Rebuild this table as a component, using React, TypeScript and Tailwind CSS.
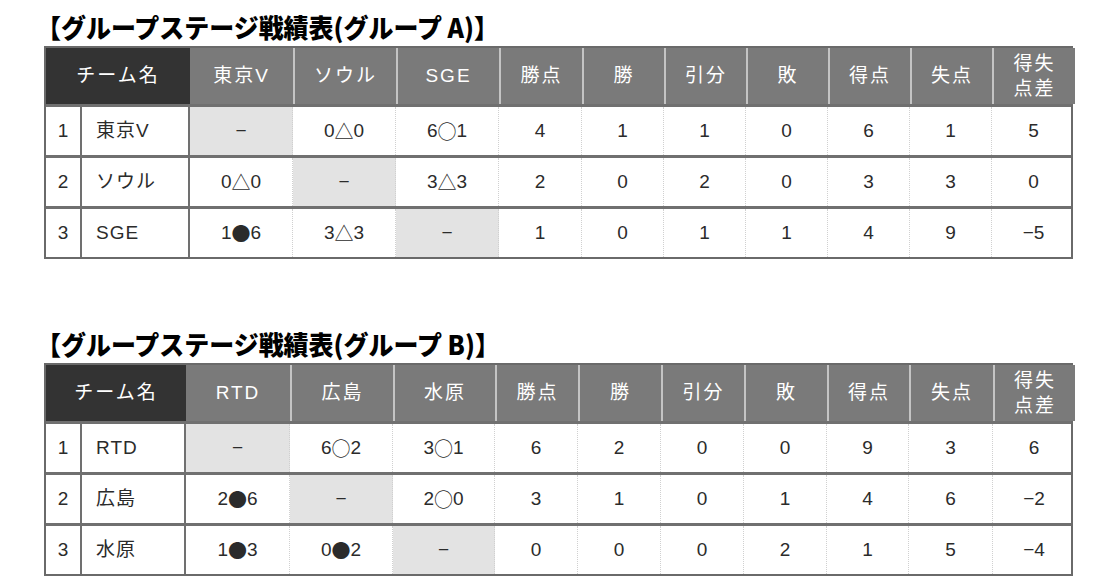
import React from 'react';

type Group = {
  title: string;
  cols: string;
  teams: string[];
  rows: string[][];
};

const groups: Group[] = [
  {
    title: '【グループステージ戦績表(グループ A)】',
    cols: 'grid-cols-[36px_108px_103px_103px_103px_83px_82px_82px_82px_82px_82px_83px]',
    teams: ['東京V', 'ソウル', 'SGE'],
    rows: [
      ['1', '東京V', '−', '0△0', '6○1', '4', '1', '1', '0', '6', '1', '5'],
      ['2', 'ソウル', '0△0', '−', '3△3', '2', '0', '2', '0', '3', '3', '0'],
      ['3', 'SGE', '1●6', '3△3', '−', '1', '0', '1', '1', '4', '9', '−5'],
    ],
  },
  {
    title: '【グループステージ戦績表(グループ B)】',
    cols: 'grid-cols-[36px_104px_104px_103px_102px_83px_83px_83px_83px_82px_84px_82px]',
    teams: ['RTD', '広島', '水原'],
    rows: [
      ['1', 'RTD', '−', '6○2', '3○1', '6', '2', '0', '0', '9', '3', '6'],
      ['2', '広島', '2●6', '−', '2○0', '3', '1', '0', '1', '4', '6', '−2'],
      ['3', '水原', '1●3', '0●2', '−', '0', '0', '0', '2', '1', '5', '−4'],
    ],
  },
];

const stats = ['勝点', '勝', '引分', '敗', '得点', '失点'];

// match score like "6○1": draw the mark with the CJK font so it's full size
function Score({ value }: { value: string }) {
  if (value.length !== 3) return <>{value}</>;
  return (
    <>
      {value[0]}
      <span className="font-['Noto_Sans_CJK_JP',sans-serif]">{value[1]}</span>
      {value[2]}
    </>
  );
}

function StandingsTable({ group }: { group: Group }) {
  return (
    <div className="w-[1029px] border-2 border-[#6a6a6a]">
      {/* header */}
      <div className={`grid ${group.cols} h-[56px] text-white text-[19px] tracking-[2px]`}>
        <div className="col-span-2 bg-[#333333] flex items-center justify-center">
          チーム名
        </div>
        {group.teams.map((t, i) => (
          <div
            key={t}
            className={`bg-[#7a7a7a] flex items-center justify-center ${
              i > 0 ? 'border-l-2 border-[#c4c4c4]' : ''
            }`}
          >
            {t}
          </div>
        ))}
        {stats.map((s) => (
          <div
            key={s}
            className="bg-[#7a7a7a] flex items-center justify-center border-l-2 border-[#c4c4c4]"
          >
            {s}
          </div>
        ))}
        <div className="bg-[#7a7a7a] flex flex-col items-center justify-center border-l-2 border-[#c4c4c4] leading-[25px]">
          <span>得失</span>
          <span>点差</span>
        </div>
      </div>
      {/* rows */}
      {group.rows.map((row, r) => (
        <div
          key={r}
          className={`grid ${group.cols} h-[51px] border-t-[3px] border-[#707070] text-[19px] text-[#2b2b2b]`}
        >
          {row.map((cell, c) => {
            let cls = 'flex items-center justify-center';
            if (c === 0) cls += ' border-r-2 border-[#707070]';
            else if (c === 1) cls = 'flex items-center pl-[14px] tracking-[1px] border-r-2 border-[#707070]';
            else if (c < 11) cls += ' border-r border-dotted border-[#d0d0d0]';
            if (c === r + 2) cls += ' bg-[#e3e3e3]';
            return (
              <div key={c} className={cls}>
                {c >= 2 && c <= 4 ? <Score value={cell} /> : cell}
              </div>
            );
          })}
        </div>
      ))}
    </div>
  );
}

export default function App() {
  return (
    <div
      className="w-[1110px] h-[587px] bg-white overflow-hidden pl-[44px] pt-[10px]"
      style={{ fontFamily: '"Liberation Sans", "Noto Sans CJK JP", sans-serif' }}
    >
      {groups.map((g, i) => (
        <div key={g.title} className={i > 0 ? 'mt-[68px]' : ''}>
          <div className="h-[36px] -ml-[8px] leading-[34px] whitespace-nowrap font-['Noto_Sans_CJK_JP',sans-serif]">
            <span className="inline-block origin-left scale-x-[0.96] text-[26px] font-black text-black">
              {g.title}
            </span>
          </div>
          <StandingsTable group={g} />
        </div>
      ))}
    </div>
  );
}
